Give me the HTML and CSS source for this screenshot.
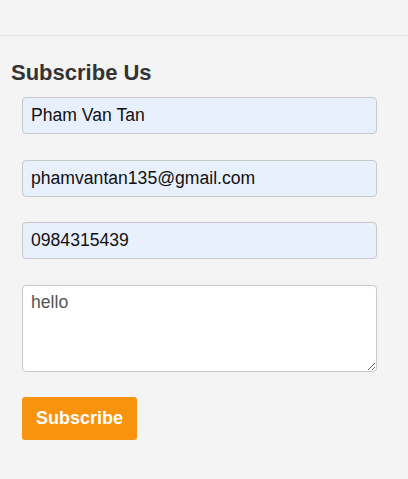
FILE: index.html
```html
<!DOCTYPE html>
<html>
<head>
<meta charset="utf-8">
<link rel="stylesheet" href="styles.css">
</head>
<body>
<div class="topbar"></div>
<section class="subscribe">
  <h2 class="title">Subscribe Us</h2>
  <form class="form">
    <input class="field filled" type="text" value="Pham Van Tan">
    <input class="field filled" type="text" value="phamvantan135@gmail.com">
    <input class="field filled" type="text" value="0984315439">
    <textarea class="field area">hello</textarea>
    <button class="btn" type="button">Subscribe</button>
  </form>
</section>
</body>
</html>
```
FILE: styles.css
```css
html, body {
  margin: 0;
  padding: 0;
  background: #f4f4f4;
  font-family: "Liberation Sans", Arial, sans-serif;
}
.topbar {
  height: 35px;
  border-bottom: 1px solid #e6e6e6;
}
.subscribe {
  padding: 24px 31px 30px 11px;
}
.title {
  margin: 0 0 11px;
  font-size: 22px;
  font-weight: bold;
  color: #333;
  line-height: 26px;
}
.form {
  display: flex;
  flex-direction: column;
  align-items: flex-start;
  gap: 25.6px;
  padding-left: 11px;
}
.field {
  box-sizing: border-box;
  width: 355px;
  height: 37px;
  margin: 0;
  padding: 0 8px;
  border: 1px solid #c8c8c8;
  border-radius: 4px;
  font-family: "Liberation Sans", Arial, sans-serif;
  font-size: 17.6px;
  color: #111;
  outline: none;
}
.filled {
  background: #e8f0fe;
}
.area {
  height: 87px;
  padding: 6px 8px;
  background: #fff;
  color: #555;
  resize: vertical;
  display: block;
}
.btn {
  box-sizing: border-box;
  width: 115px;
  height: 43px;
  border: none;
  border-radius: 3px;
  background: #f7930c;
  color: #fff;
  font-family: "Liberation Sans", Arial, sans-serif;
  font-size: 18px;
  font-weight: bold;
  padding: 0;
}
```
